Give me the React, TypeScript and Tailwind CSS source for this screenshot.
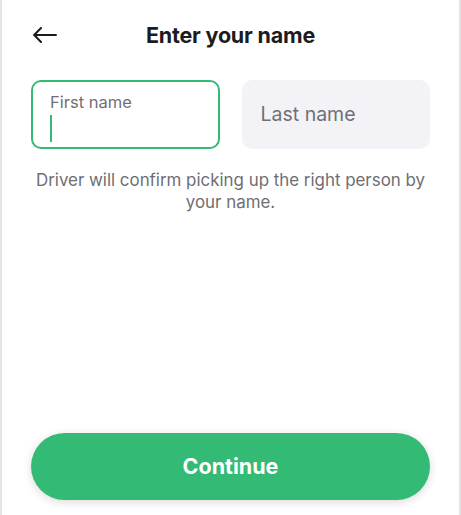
import React from 'react';

const BackArrow: React.FC = () => (
  <svg width="24" height="16" viewBox="0 0 24 16" fill="none" stroke="#1c1c1e" strokeWidth="2" strokeLinecap="round" strokeLinejoin="round">
    <path d="M23 8H1.5" />
    <path d="M8 1L1.2 8L8 15" />
  </svg>
);

const App: React.FC = () => {
  return (
    <div
      className="w-[461px] h-[515px] bg-white border-x-2 border-[#e4e4e6] flex flex-col overflow-hidden"
      style={{ fontFamily: 'Inter, "Noto Sans", sans-serif' }}
    >
      <header className="relative flex items-center justify-center h-[36px] mt-[17px]">
        <button className="absolute left-[31px] top-[10px] p-0">
          <BackArrow />
        </button>
        <h1 className="text-[21.5px] font-bold text-[#1c1c1e] tracking-[-0.2px]">Enter your name</h1>
      </header>

      <div className="flex gap-[22px] px-[29px] mt-[27px]">
        <div className="flex-1 h-[69px] rounded-[10px] border-2 border-[#33bb75] px-[17px] pt-[10px]">
          <div className="text-[16.5px] text-[#707074] leading-[20px]">First name</div>
          <div className="w-[2px] h-[27px] bg-[#33bb75] mt-[3px]" />
        </div>
        <div className="flex-1 h-[69px] rounded-[10px] bg-[#f3f3f7] flex items-center px-[19px]">
          <span className="text-[19.5px] text-[#707074]">Last name</span>
        </div>
      </div>

      <p className="mt-[20px] px-[30px] text-center text-[16.9px] leading-[22px] text-[#6e6e72]">
        Driver will confirm picking up the right person by your name.
      </p>

      <div className="flex-1" />

      <div className="px-[29px] pb-[15px]">
        <button className="w-full h-[67px] rounded-full bg-[#33bb75] text-white text-[21.5px] font-bold shadow-[0_2px_10px_rgba(0,0,0,0.15)]">
          Continue
        </button>
      </div>
    </div>
  );
};

export default App;
